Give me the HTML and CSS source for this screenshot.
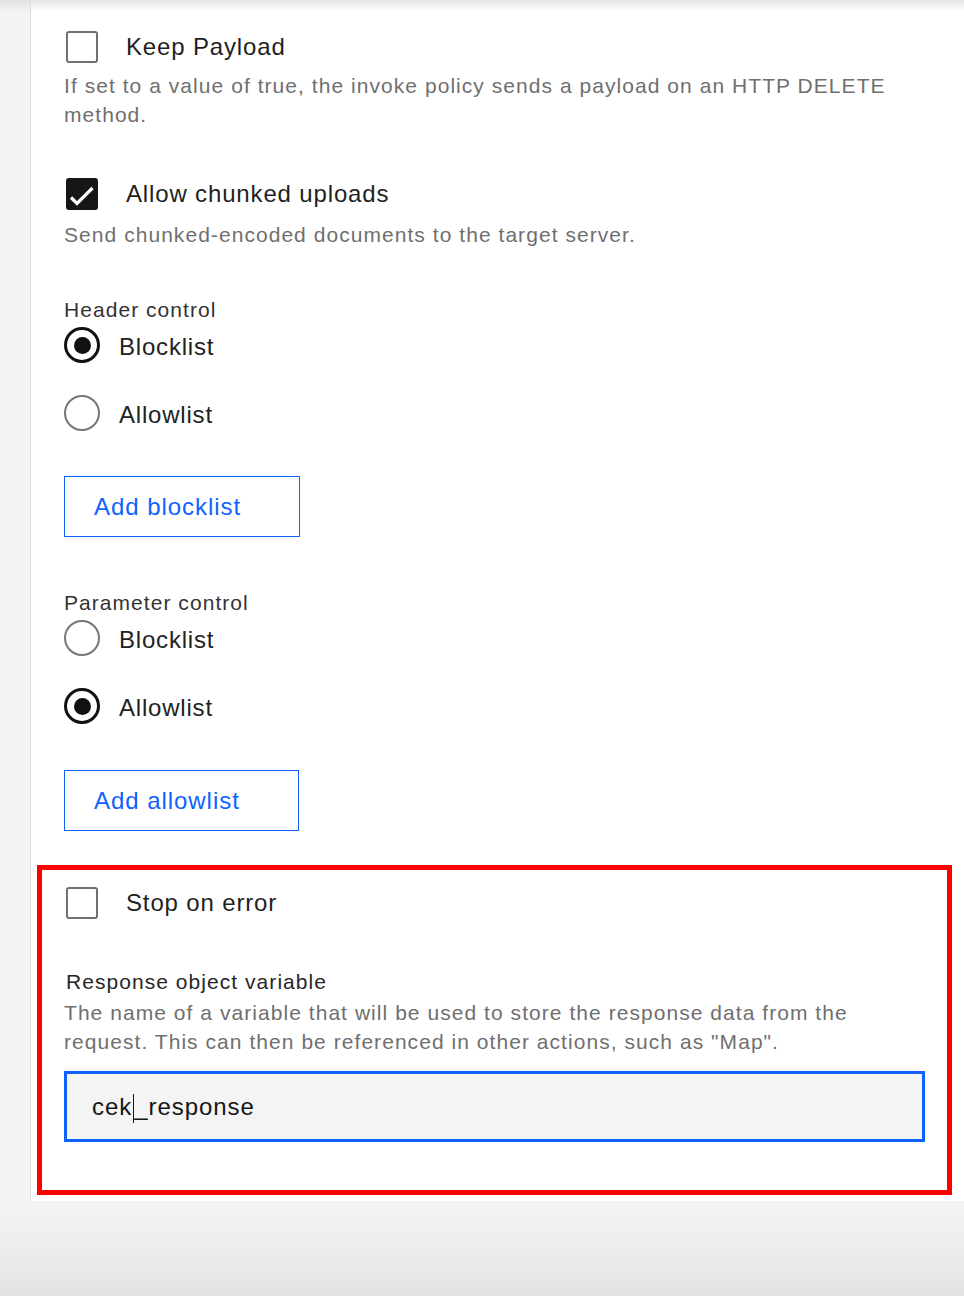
FILE: index.html
```html
<!DOCTYPE html>
<html lang="en">
<head>
<meta charset="utf-8">
<title>Invoke settings</title>
<link rel="stylesheet" href="styles.css">
</head>
<body>
<div class="page">
  <div class="gutter"></div>
  <main class="panel">
    <div class="upper">
      <div class="check-row">
        <span class="checkbox"></span>
        <span class="check-label">Keep Payload</span>
      </div>
      <p class="desc">If set to a value of true, the invoke policy sends a payload on an HTTP DELETE method.</p>

      <div class="check-row check-row--spaced">
        <span class="checkbox checkbox--on">
          <svg viewBox="0 0 32 32" width="32" height="32"><path d="M5 19.5 L11 25.5 L26.5 10" fill="none" stroke="#fff" stroke-width="3.2"/></svg>
        </span>
        <span class="check-label">Allow chunked uploads</span>
      </div>
      <p class="desc desc--tight">Send chunked-encoded documents to the target server.</p>

      <div class="group">
        <div class="group-label">Header control</div>
        <div class="radio-row"><span class="radio radio--on"></span><span class="radio-label">Blocklist</span></div>
        <div class="radio-row radio-row--next"><span class="radio"></span><span class="radio-label">Allowlist</span></div>
        <button class="btn">Add blocklist</button>
      </div>

      <div class="group group--second">
        <div class="group-label">Parameter control</div>
        <div class="radio-row"><span class="radio"></span><span class="radio-label">Blocklist</span></div>
        <div class="radio-row radio-row--next"><span class="radio radio--on"></span><span class="radio-label">Allowlist</span></div>
        <button class="btn btn--second">Add allowlist</button>
      </div>
    </div>

    <section class="highlight">
      <div class="check-row">
        <span class="checkbox"></span>
        <span class="check-label">Stop on error</span>
      </div>
      <div class="field-label">Response object variable</div>
      <p class="desc desc--field">The name of a variable that will be used to store the response data from the request. This can then be referenced in other actions, such as "Map".</p>
      <div class="input"><span>cek</span><span class="caret"></span><span>_response</span></div>
    </section>
  </main>
</div>
</body>
</html>
```
FILE: styles.css
```css
* { box-sizing: border-box; }
html, body { margin: 0; padding: 0; }
body {
  width: 964px;
  height: 1296px;
  overflow: hidden;
  font-family: "Liberation Sans", Arial, sans-serif;
  color: #1c1c1c;
  background: linear-gradient(180deg, #f3f3f3 1200px, #eeeeee 1240px, #e3e3e3 1296px);
}
.page {
  display: flex;
  align-items: flex-start;
}
.gutter {
  width: 30px;
  align-self: stretch;
  background: linear-gradient(180deg, #e2e2e2 0, #f3f3f3 12px);
}
.panel {
  flex: 1;
  border-left: 1px solid #dedede;
  background: linear-gradient(180deg, #e6e6e6 0, #ffffff 12px);
  padding: 31px 0 6px 0;
}
.upper { padding-left: 33px; }

.check-row {
  display: flex;
  align-items: center;
  height: 32px;
}
.check-row--spaced { margin-top: 49px; }
.checkbox {
  width: 32px;
  height: 32px;
  margin-left: 2px;
  border: 2.5px solid #707070;
  border-radius: 3px;
  flex: none;
}
.checkbox--on {
  background: #161616;
  border-color: #161616;
  position: relative;
}
.checkbox--on svg {
  position: absolute;
  left: -2.5px;
  top: -2.5px;
}
.check-label {
  margin-left: 28px;
  font-size: 24px;
  letter-spacing: 0.85px;
  color: #1f1f1f;
}

.desc {
  margin: 8px 0 0 0;
  max-width: 860px;
  font-size: 21px;
  line-height: 29px;
  letter-spacing: 1.05px;
  color: #6f6f6f;
}
.desc--tight { margin-top: 10px; }

.group { margin-top: 47px; }
.group--second { margin-top: 52px; }
.group-label {
  font-size: 21px;
  line-height: 28px;
  letter-spacing: 1.05px;
  color: #333333;
}
.radio-row {
  display: flex;
  align-items: center;
  height: 36px;
  margin-top: 3px;
}
.radio-row--next { margin-top: 32px; }
.radio {
  width: 36px;
  height: 36px;
  border: 2.5px solid #767676;
  border-radius: 50%;
  flex: none;
  display: flex;
  align-items: center;
  justify-content: center;
}
.radio--on { border: 3px solid #111111; }
.radio--on::after {
  content: "";
  width: 17px;
  height: 17px;
  border-radius: 50%;
  background: #111111;
}
.radio-label {
  margin-left: 19px;
  margin-top: 4px;
  font-size: 24px;
  letter-spacing: 0.8px;
  color: #222222;
}

.btn {
  display: block;
  margin-top: 45px;
  height: 61px;
  padding: 0 58px 0 29px;
  background: #ffffff;
  border: 1px solid #0f62fe;
  border-radius: 0;
  color: #0f62fe;
  font-family: "Liberation Sans", Arial, sans-serif;
  font-size: 24px;
  letter-spacing: 0.95px;
  text-align: left;
}
.btn--second { margin-top: 46px; }

.highlight {
  margin: 34px 12px 0 6px;
  border: 5px solid #ff0000;
  padding: 17px 22px 48px 22px;
}
.field-label {
  margin-top: 49px;
  margin-left: 2px;
  font-size: 21px;
  line-height: 28px;
  letter-spacing: 1.05px;
  color: #262626;
}
.desc--field { margin-top: 2px; }
.input {
  margin-top: 15px;
  height: 71px;
  border: 3px solid #0f62fe;
  background: #f4f4f4;
  padding-left: 25px;
  display: flex;
  align-items: center;
  font-size: 24px;
  letter-spacing: 0.95px;
  color: #161616;
}
.caret {
  display: inline-block;
  width: 1px;
  height: 29px;
  margin: 4px 0 0 1px;
  background: #161616;
}
```
